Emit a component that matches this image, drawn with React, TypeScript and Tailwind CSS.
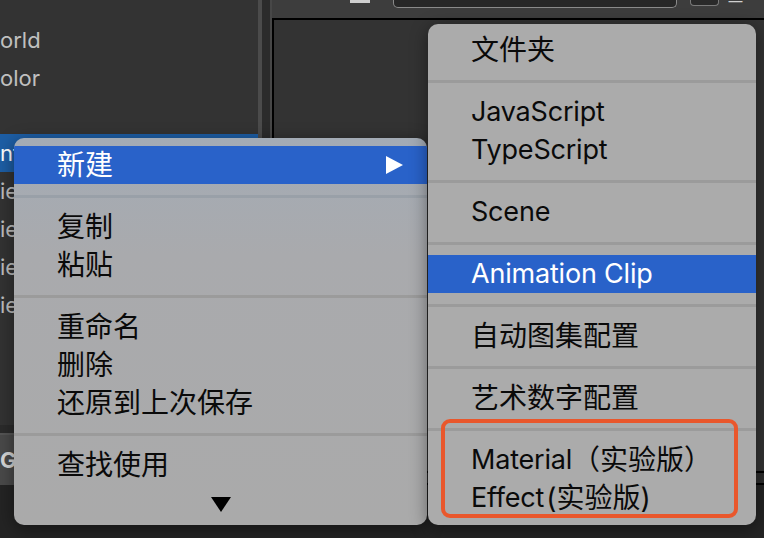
import React from 'react';

const FONT = "font-[family-name:Inter,'Noto_Sans_CJK_SC',sans-serif]";

const Row = ({ children, active }: { children: React.ReactNode; active?: boolean }) => (
  <div
    className={`h-[38px] flex items-center pl-[43px] text-[28px] leading-[38px] ${
      active ? 'bg-[#2962c9] text-white' : 'text-[#0a0a0a]'
    }`}
  >
    {children}
  </div>
);

// latin words run a touch narrower than the CJK glyphs
const Latin = ({ children }: { children: React.ReactNode }) => (
  <span className="text-[27px] tracking-[-0.2px]">{children}</span>
);

const Sep = ({ tint }: { tint?: boolean }) => (
  <div className="h-[24px] flex items-center">
    <div className={`h-[3px] w-full ${tint ? 'bg-[#99a0a8]' : 'bg-[#9b9b9b]'}`} />
  </div>
);

const TreeRow = ({ text, selected }: { text?: string; selected?: boolean }) => (
  <div
    className={`h-[38px] flex items-center text-[22px] ${
      selected ? 'bg-[#1d5ea5] text-white' : 'text-[#c0c0c0]'
    }`}
  >
    {text}
  </div>
);

export default function App() {
  return (
    <div className={`relative w-[764px] h-[538px] overflow-hidden bg-[#242424] ${FONT}`}>
      {/* editor background */}
      <div className="flex h-[485px]">
        {/* hierarchy panel */}
        <div className="w-[258px] flex flex-col">
          <div className="flex-1 bg-[#333333] pt-[21px] flex flex-col">
            <TreeRow text="orld" />
            <TreeRow text="olor" />
            <div className="h-[37px]" />
            <TreeRow text="nt" selected />
            <TreeRow text="ie" />
            <TreeRow text="ie" />
            <TreeRow text="ie" />
            <TreeRow text="ie" />
          </div>
          <div className="h-[8px] bg-[#2b2b2b]" />
          <div className="h-[2px] bg-[#555555]" />
          <div className="h-[50px] bg-[#4a4a4a] flex items-center text-[22px] font-bold text-[#d8d8d8]">
            Gr
          </div>
        </div>

        {/* splitter */}
        <div className="w-[4px] bg-[#4b4b4b]" />
        <div className="w-[8px] bg-[#2b2b2b]" />
        <div className="w-[2px] bg-[#474747]" />

        {/* scene panel */}
        <div className="flex-1 flex flex-col">
          <div className="h-[18px] bg-[#3d3d3d] flex items-start">
            <div className="ml-[78px] w-[20px] h-[3px] bg-[#d0d0d0]" />
            <div className="ml-[23px] w-[284px] h-[8px] bg-[#272727] border border-t-0 border-[#8a8a8a] rounded-b-[5px]" />
            <div className="ml-[13px] w-[29px] h-[6px] bg-[#2a2a2a] border border-t-0 border-[#7a7a7a] rounded-b-[4px]" />
            <div className="ml-[9px] h-[4px] overflow-hidden text-[16px] leading-[16px] text-[#cfcfcf]">
              <div className="-mt-[12px]">三 显</div>
            </div>
          </div>
          <div className="flex-1 bg-[#333333] border-l-2 border-t-2 border-black" />
          <div className="h-[14px] bg-[#2e2e2e] border-t-2 border-b-2 border-black" />
        </div>
      </div>

      {/* context menu */}
      <div className="absolute left-[14px] top-[138px] w-[413px] h-[387px] rounded-[10px] bg-linear-to-b from-[#a3abb5] via-[#a9aaad] via-30% to-[#aaaaaa] pt-[8px] shadow-[0_4px_18px_rgba(0,0,0,0.45)] overflow-hidden">
        <div className="h-[38px] flex items-center justify-between pl-[43px] pr-[24px] bg-[#2962c9] text-white text-[28px] leading-[38px]">
          <span>新建</span>
          <svg width="17" height="18" viewBox="0 0 17 18">
            <polygon points="0,0 17,9 0,18" fill="#ffffff" />
          </svg>
        </div>
        <Sep tint />
        <Row>复制</Row>
        <Row>粘贴</Row>
        <Sep />
        <Row>重命名</Row>
        <Row>删除</Row>
        <Row>还原到上次保存</Row>
        <Sep />
        <Row>查找使用</Row>
        <div className="h-[41px] flex items-center justify-center">
          <svg width="20" height="15" viewBox="0 0 20 15">
            <polygon points="0,0 20,0 10,15" fill="#000000" />
          </svg>
        </div>
      </div>

      {/* submenu */}
      <div className="absolute left-[428px] top-[24px] w-[328px] h-[501px] rounded-[10px] bg-[#ababab] pt-[7px] shadow-[0_4px_18px_rgba(0,0,0,0.45)] overflow-hidden">
        <Row>文件夹</Row>
        <Sep />
        <Row><Latin>JavaScript</Latin></Row>
        <Row><Latin>TypeScript</Latin></Row>
        <Sep />
        <Row><Latin>Scene</Latin></Row>
        <Sep />
        <Row active><Latin>Animation Clip</Latin></Row>
        <Sep />
        <Row>自动图集配置</Row>
        <Sep />
        <Row>艺术数字配置</Row>
        <Sep />
        <Row><Latin>Material</Latin>（实验版）</Row>
        <Row><Latin>Effect</Latin><span className="ml-[2px]">(实验版)</span></Row>
      </div>

      {/* annotation */}
      <div className="absolute left-[441px] top-[419px] w-[297px] h-[99px] border-4 border-[#e9572c] rounded-[9px]" />
    </div>
  );
}
